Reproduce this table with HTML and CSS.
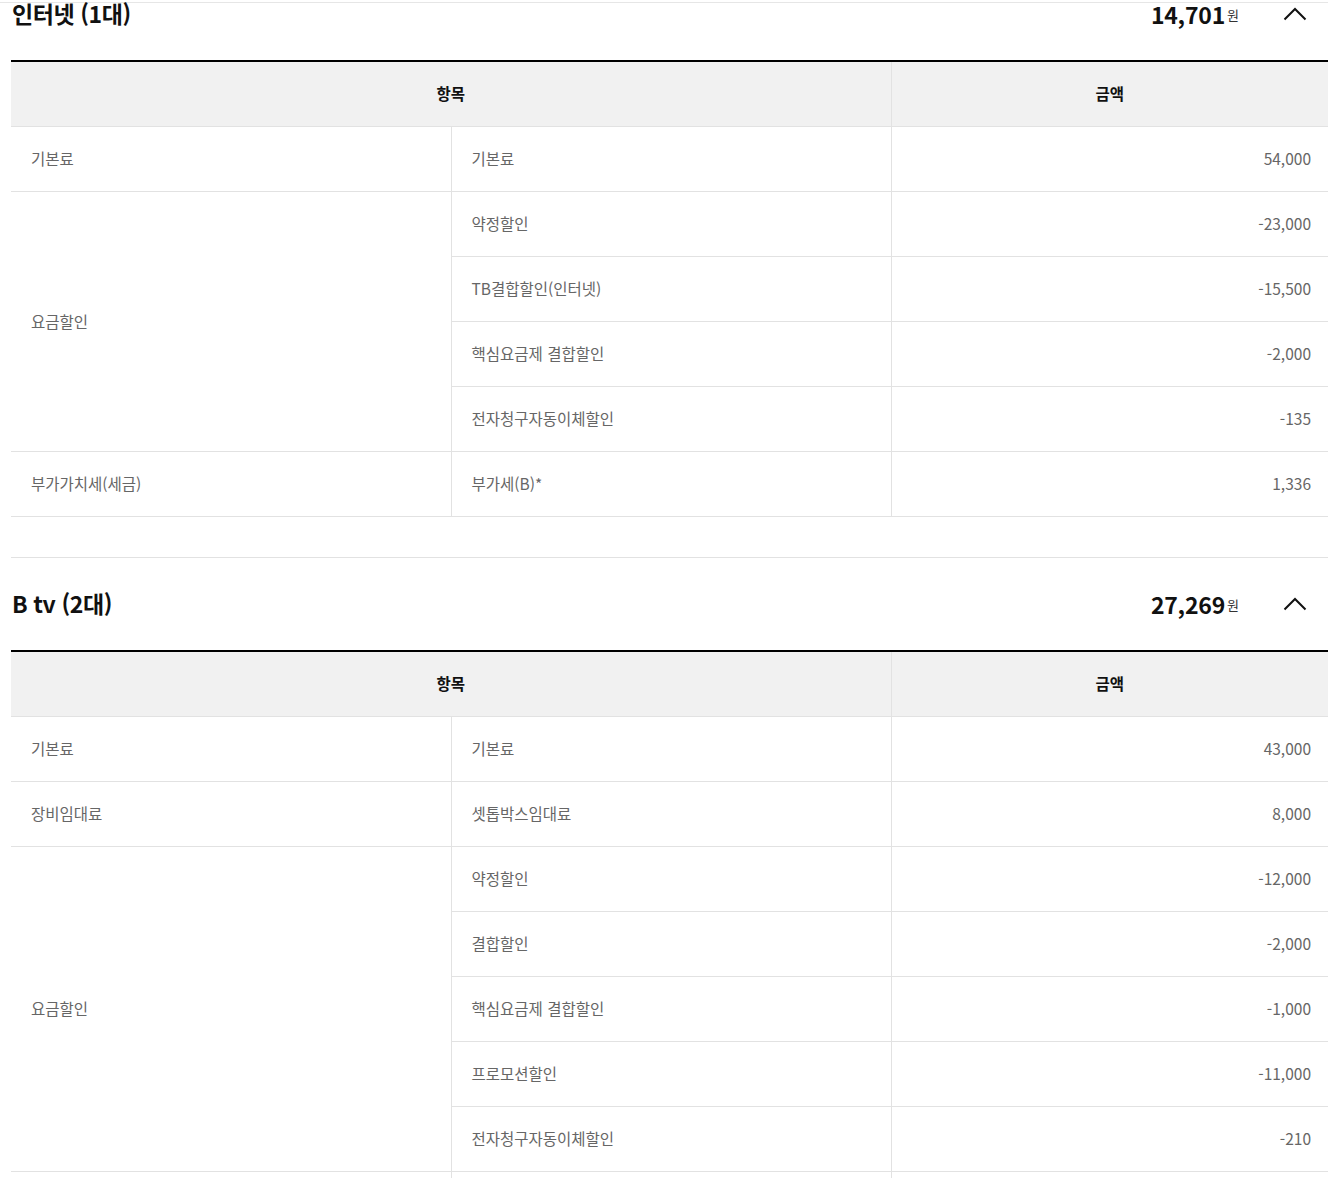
FILE: index.html
```html
<!DOCTYPE html>
<html lang="ko">
<head>
<meta charset="utf-8">
<title>요금 상세</title>
<link rel="stylesheet" href="styles.css">
</head>
<body>
<div class="topline"></div>
<div class="page">
  <section class="bill first">
    <div class="bill-head">
      <h3 class="bill-title">인터넷 (1대)</h3>
      <div class="bill-sum"><strong>14,701</strong><span class="won">원</span></div>
      <button class="toggle" aria-label="접기"><svg width="24" height="14" viewBox="0 0 24 14"><path d="M1.5 12.5 L12 2 L22.5 12.5" fill="none" stroke="#111" stroke-width="2"/></svg></button>
    </div>
    <table class="tbl">
      <colgroup><col class="c1"><col class="c2"><col class="c3"></colgroup>
      <thead><tr><th colspan="2">항목</th><th>금액</th></tr></thead>
      <tbody>
        <tr><td>기본료</td><td class="sub">기본료</td><td class="num">54,000</td></tr>
        <tr><td rowspan="4">요금할인</td><td class="sub">약정할인</td><td class="num">-23,000</td></tr>
        <tr><td class="sub">TB결합할인(인터넷)</td><td class="num">-15,500</td></tr>
        <tr><td class="sub">핵심요금제 결합할인</td><td class="num">-2,000</td></tr>
        <tr><td class="sub">전자청구자동이체할인</td><td class="num">-135</td></tr>
        <tr><td>부가가치세(세금)</td><td class="sub">부가세(B)*</td><td class="num">1,336</td></tr>
      </tbody>
    </table>
  </section>
  <section class="bill">
    <div class="bill-head">
      <h3 class="bill-title">B tv (2대)</h3>
      <div class="bill-sum"><strong>27,269</strong><span class="won">원</span></div>
      <button class="toggle" aria-label="접기"><svg width="24" height="14" viewBox="0 0 24 14"><path d="M1.5 12.5 L12 2 L22.5 12.5" fill="none" stroke="#111" stroke-width="2"/></svg></button>
    </div>
    <table class="tbl">
      <colgroup><col class="c1"><col class="c2"><col class="c3"></colgroup>
      <thead><tr><th colspan="2">항목</th><th>금액</th></tr></thead>
      <tbody>
        <tr><td>기본료</td><td class="sub">기본료</td><td class="num">43,000</td></tr>
        <tr><td>장비임대료</td><td class="sub">셋톱박스임대료</td><td class="num">8,000</td></tr>
        <tr><td rowspan="5">요금할인</td><td class="sub">약정할인</td><td class="num">-12,000</td></tr>
        <tr><td class="sub">결합할인</td><td class="num">-2,000</td></tr>
        <tr><td class="sub">핵심요금제 결합할인</td><td class="num">-1,000</td></tr>
        <tr><td class="sub">프로모션할인</td><td class="num">-11,000</td></tr>
        <tr><td class="sub">전자청구자동이체할인</td><td class="num">-210</td></tr>
        <tr><td>부가가치세(세금)</td><td class="sub">부가세(B)*</td><td class="num">2,479</td></tr>
      </tbody>
    </table>
  </section>
</div>
</body>
</html>
```

FILE: styles.css
```css
html, body {
  margin: 0;
  padding: 0;
  background: #fff;
}
body {
  font-family: "Noto Sans CJK KR", "Noto Sans", sans-serif;
  color: #111;
  overflow: hidden;
}
.topline {
  position: absolute;
  top: 2px;
  left: 0;
  right: 0;
  height: 1px;
  background: #e6e6e6;
  z-index: 0;
}
.page {
  padding-left: 11px;
  position: relative;
  z-index: 1;
}
.bill {
  border-top: 1px solid #e2e2e2;
}
.bill.first {
  margin-top: -33px;
}
.bill + .bill {
  margin-top: 40px;
}
.bill-head {
  height: 92px;
  display: flex;
  align-items: center;
  border-bottom: 2px solid #000;
  padding-left: 1px;
  padding-right: 21px;
}
.bill-title {
  margin: 0;
  font-size: 23px;
  font-weight: 700;
  letter-spacing: -0.4px;
  flex: 1;
  color: #111;
  padding-bottom: 2px;
}
.bill-sum {
  display: flex;
  align-items: center;
  margin-right: 44px;
}
.bill-sum strong {
  font-size: 23px;
  font-weight: 700;
  letter-spacing: -0.2px;
}
.won {
  font-size: 13px;
  color: #333;
  margin-left: 2px;
  margin-top: 1px;
}
.toggle {
  border: 0;
  background: none;
  padding: 0;
  width: 24px;
  height: 14px;
  display: flex;
  margin-top: -1px;
}
.tbl {
  width: 100%;
  border-collapse: collapse;
  table-layout: fixed;
}
.c1 { width: 440px; }
.c2 { width: 440px; }
.tbl th {
  height: 62px;
  background: #f1f1f1;
  font-size: 15.5px;
  font-weight: 700;
  color: #111;
  text-align: center;
  padding: 0 0 2px;
  border-bottom: 1px solid #e2e2e2;
  border-left: 1px solid #e2e2e2;
}
.tbl th:first-child { border-left: 0; }
.tbl td {
  height: 62px;
  padding: 0 17px 2px 20px;
  font-size: 15.5px;
  color: #666;
  border-bottom: 1px solid #e2e2e2;
  vertical-align: middle;
}
.tbl td.sub {
  border-left: 1px solid #e2e2e2;
}
.tbl td.num {
  text-align: right;
  border-left: 1px solid #e2e2e2;
}
```
